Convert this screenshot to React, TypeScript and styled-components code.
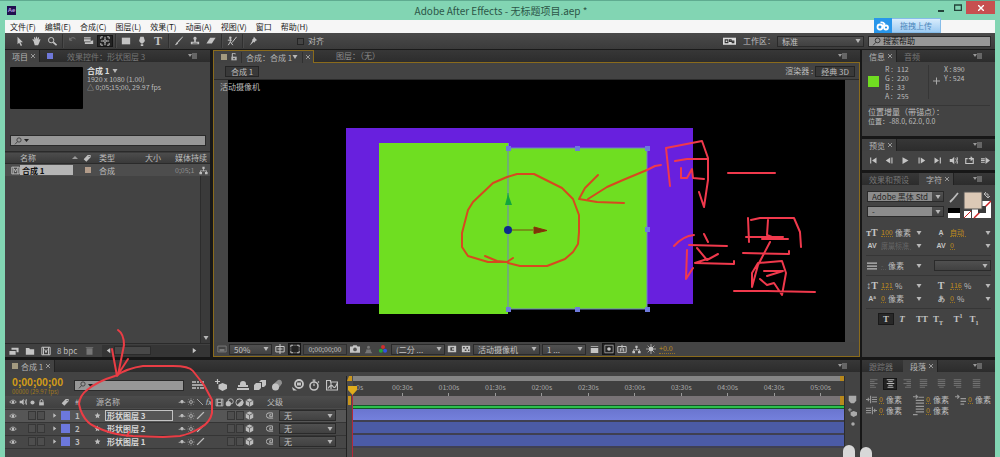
import React from "react";
import styled, { createGlobalStyle, css } from "styled-components";

const GlobalStyle = createGlobalStyle`
  *, *::before, *::after { box-sizing: border-box; }
  html, body, #root { height: 100%; margin: 0; }
  body { overflow: hidden; background: #82d5b3; font-family: "Noto Sans CJK SC", "Noto Sans", sans-serif; font-size: 8px; line-height: 10px; color: #bdbdbd; }
  button, input, select { font: inherit; color: inherit; margin: 0; padding: 0; border: 0; border-radius: 0; background: none; appearance: none; outline: none; }
  table { border-collapse: collapse; table-layout: fixed; width: 100%; }
  td, th { padding: 0; font-weight: 400; text-align: left; }
  svg { display: block; flex: none; }
`;

/* ---------- icons ---------- */

const s = { fill: "none", stroke: "currentColor", strokeWidth: 1.2 } as const;
const ICONS: Record<string, React.ReactNode> = {
  cursor: <path d="M3 1v9l2-2 2 4 1.500-1-2-3.500h3z" fill="currentColor" />,
  hand: <path d="M3 6 1.500 4.500l1-1L4 5 3.500 1.500h1.200L5.500 4 6 1h1.200l.2 3L8.500 1.500l1.200.3L9.200 5l1.300-1.500.9.700L9.500 9 8.500 11H4.500z" fill="currentColor" />,
  zoom: <><circle cx="5" cy="5" r="3.200" {...s} /><path d="M7.500 7.500 11.500 11" {...s} strokeWidth={2} /></>,
  rotate: <path d="M2 5a4 4 0 0 1 7-1.500M2 2v3h3" {...s} />,
  camera: <path d="M0 1.500h8v1.500H0zM0 4h8v2l3-1v4.500H1V7.500h7V6.500H0z" fill="currentColor" />,
  anchor: <><path d="M1 3.500V1h2.500M8.500 1H11v2.500M11 8.500V11H8.500M3.500 11H1V8.500" {...s} /><circle cx="6" cy="6" r="1.600" {...s} /><path d="M6 1v2.500M6 8.500V11M1 6h2.500M8.500 6H11" {...s} /></>,
  rect: <path d="M1 2h10v8H1z" fill="currentColor" />,
  pen: <path d="M4 1h4l1.500 5L7 9H5L2.500 6zM4.500 10h3v2h-3z" fill="currentColor" />,
  brush: <path d="M11 1 5.500 7.500 4.200 6.500 10 1zM4 7l1.300 1.200C4.500 10 3 11 1 11c1.500-1 1.500-3 3-4z" fill="currentColor" />,
  stamp: <path d="M6 1a2 2 0 0 1 1 3.700V7h4v3H1V7h4V4.700A2 2 0 0 1 6 1zM3 8h6v1H3z" fill="currentColor" fillRule="evenodd" />,
  eraser: <path d="M5 2h6.500L7 9H.5z" fill="currentColor" />,
  roto: <><circle cx="4" cy="2" r="1.500" fill="currentColor" /><path d="M4 3v4L1.500 11M4 7l3 4M1 5h5M11.500 1 6 8" {...s} /></>,
  pin: <path d="M7 1 11 5 9.500 5.500 7.500 8 7 6.800 2 11.500 5.500 5.500 4.500 5l2-2z" fill="currentColor" />,
  search: <><circle cx="7.500" cy="4.500" r="3.200" {...s} /><path d="M5.200 7 1.500 11" {...s} /></>,
  eye: <><path d="M1 6q5-6 10 0q-5 5-10 0z" {...s} /><circle cx="6" cy="6" r="2" fill="currentColor" /></>,
  speaker: <><path d="M1 4h3l3-3v10L4 8H1z" fill="currentColor" /><path d="M9 3q2 3 0 6M10.800 1.500q2 4.500 0 9" {...s} /></>,
  dot: <circle cx="6" cy="6" r="3.500" fill="currentColor" />,
  lock: <><path d="M2 5.500h8V11H2z" fill="currentColor" /><path d="M3.500 6V3.500a2.500 2.500 0 0 1 5 0V6" {...s} strokeWidth={1.600} /></>,
  unlock: <><path d="M2 5.500h8V11H2z" fill="currentColor" /><path d="M3.500 6V3a2 2 0 0 1 4.500-1" {...s} strokeWidth={1.600} /><path d="M5 7.500h2v2H5z" fill="#333" /></>,
  tag: <path d="M1 8 7 1.500h4.500V5L5 11.500zM8.500 3v1.500H10V3z" fill="currentColor" fillRule="evenodd" />,
  star: <path d="m6 1 1.500 3.300 3.500.4-2.600 2.400.7 3.500L6 8.900 2.900 10.600l.7-3.500L1 4.700l3.500-.4z" fill="currentColor" />,
  tri: <path d="M4 2v8l5-4z" fill="currentColor" />,
  shy: <path d="M1 6.500h3M8 6.500h3M6 3.500a2 2 0 1 1 0 4 2 2 0 0 1 0-4" {...s} fill="currentColor" />,
  sun: <><circle cx="6" cy="6" r="2.200" {...s} /><path d="M6 .5v2M6 9.500v2M.5 6h2M9.500 6h2M2 2l1.300 1.300M8.700 8.700 10 10M10 2 8.700 3.300M3.300 8.700 2 10" {...s} strokeWidth={0.800} /></>,
  flare: <><circle cx="6" cy="6" r="2.800" fill="currentColor" /><path d="M6 0v12M0 6h12M2 2l8 8M10 2l-8 8" {...s} strokeWidth={0.900} /></>,
  slash: <path d="M1.500 10.500 10.500 1.500" {...s} strokeWidth={1.800} />,
  back: <path d="M1.500 1.500 10.500 10.500" {...s} />,
  film: <><path d="M1.500 1.500h9v9h-9zM3.500 1.500v9M8.500 1.500v9M3.500 6h5" {...s} /></>,
  blend: <><circle cx="4.500" cy="7.500" r="3.500" fill="currentColor" /><circle cx="7.500" cy="4.500" r="3.500" {...s} /></>,
  half: <><circle cx="6" cy="6" r="4.800" {...s} /><path d="M9.500 2.500A4.800 4.800 0 0 1 2.600 9.400z" fill="currentColor" /></>,
  cube: <><path d="M6 .8 11 3v6l-5 2.500L1 9V3z" fill="currentColor" /><path d="M1 3l5 2.500L11 3M6 5.500v6" fill="none" stroke="#444" strokeWidth={0.900} /></>,
  spiral: <path d="M9.500 9.500H4a3.500 3.500 0 1 1 0-7h4.500v5.200H5V5h2" {...s} />,
  graph: <path d="M0 3h4M0 6h3M0 9h4M5 9h2M5 3h2M8 3h4M9 6h3M8 9h4M3 6h6" {...s} strokeWidth={1.500} />,
  cubestar: <><path d="M7.500 4 12 5.800v4L7.500 12 3.500 9.800v-4z" fill="currentColor" /><path d="M2.500 0v5M0 2.500h5" {...s} /></>,
  shyman: <path d="M0 9h12v2H0zM1 8V6h2V5a3 3 0 0 1 6 0v1h2v2z" fill="currentColor" />,
  frames: <path d="M0 6l2-2h5v5l-2 2H0zM5 3l2-2h5v5l-2 2H8V3z" fill="currentColor" />,
  motion: <><circle cx="4.500" cy="8" r="3.500" fill="currentColor" /><path d="m2 5.500 5-4.500q4-1 4 3.500L7 10z" fill="currentColor" opacity="0.600" /></>,
  bulb: <><circle cx="7" cy="5" r="4" {...s} strokeWidth={1.800} /><path d="M5 3.500h4v3H5zM0 8l5 3.500H1z" fill="currentColor" /></>,
  stopwatch: <><circle cx="6" cy="7" r="4" {...s} strokeWidth={1.600} /><path d="M6 7V4.500M4.500 1h3M6 1v2M10 2.500l1 1" {...s} /></>,
  curve: <><path d="M.5 1.500h4v1.500h7v8h-11z" {...s} /><path d="M2 9.500q3-5 5-2t4-3M5 3v7" {...s} /></>,
  bin: <path d="M2 3h8v8.500H2zM1 1.500h10v1H1z" fill="currentColor" />,
  folder: <path d="M1 2.500h4l1 1.500h5v6.500H1z" fill="currentColor" />,
  interpret: <path d="M3 2h8.500v5.500H9V4.500H3zM.5 6H8v4.500H.5z" fill="currentColor" />,
  comp: <><path d="M1 1.500h10v9H1z" {...s} /><path d="M3 1.500v9M9 1.500v9M4.500 4l1.500 4 1.500-4" {...s} /></>,
  flow: <path d="M4.500 1h3v3h-3zM.5 8h3.500v3H.5zM8 8h3.500v3H8zM5.500 4h1v2h4v2h-1V7h-7v1h-1V6h4z" fill="currentColor" />,
  left: <path d="M9 1.500v9L3 6z" fill="currentColor" />,
  right: <path d="M3 1.500v9L9 6z" fill="currentColor" />,
  screen: <><path d="M1 2.500h10v7H1z" {...s} /><path d="M3 6h6v3H3z" fill="currentColor" /></>,
  grid: <path d="M1 3h10v6.500H1zM6 0v12M3 6h6" {...s} />,
  mask: <path d="M1 4V1.500h3M8 1.500h3V4M11 8v2.500H8M4 10.500H1V8M1 5.500v1M11 5.500v1M5.500 1.500h1M5.500 10.500h1" {...s} />,
  snap: <><path d="M0 3h3l1-1.500h4L9 3h3v7.500H0z" fill="currentColor" /><circle cx="6" cy="6.500" r="2.200" fill="#555" /></>,
  person: <path d="M6 1a2 2 0 1 1 0 4 2 2 0 0 1 0-4zM3 6h6v2l2 3H1l2-3z" fill="currentColor" />,
  rgb: <><circle cx="6" cy="3.500" r="2.400" fill="#d02d2d" /><circle cx="3.500" cy="8" r="2.400" fill="#22a63b" /><circle cx="8.500" cy="8" r="2.400" fill="#3452e0" /></>,
  checker: <path d="M1 2h10v8H1zM2.500 3.500v2h2v-2zM6.500 3.500v2h2v-2zM4.500 6.500v2h2v-2zM8.500 6.500v2h1.500v-2z" fill="currentColor" fillRule="evenodd" />,
  roi: <path d="M1 2h10v8H1zM4 4v4h4.500V7H6V5h2.500V4z" fill="currentColor" fillRule="evenodd" />,
  pixel: <path d="M1 1.500h10v1.200H1zM1 4h10v6.500H1z" fill="currentColor" />,
  fast: <><path d="M1 1.500h10v9H1z" {...s} strokeWidth={0.800} /><circle cx="6" cy="6" r="2.200" fill="currentColor" /></>,
  timeline: <path d="M1 3h10v7H1zM4 5v4M8 5v4M6 1v7" {...s} />,
  first: <path d="M1.500 2H3v8H1.500zM10 2v8L4 6z" fill="currentColor" />,
  prev: <path d="M7 2v8L1 6zM8.500 2H10v8H8.500z" fill="currentColor" />,
  play: <path d="M2 1.500v9L10 6z" fill="currentColor" />,
  next: <path d="M2 2h1.500v8H2zM5 2v8l6-4z" fill="currentColor" />,
  last: <path d="M2 2v8l6-4zM9 2h1.500v8H9z" fill="currentColor" />,
  loop: <path d="M3.500 3.500H1v6.500h10V3.500H5M7.500 1 10 3.500 7.500 6" {...s} strokeWidth={1.500} />,
  ram: <path d="M0 3h5v1.500H0zM0 5.300h5v1.500H0zM0 7.600h5v1.500H0zM6 1.500v9L12 6z" fill="currentColor" />,
  lines: <path d="M0 2.500h12M0 6h12M0 9.500h12" {...s} strokeWidth={1.500} />,
  alignL: <path d="M0 1h10M0 3.500h6M0 6h10M0 8.500h6M0 11h8" {...s} />,
  alignC: <path d="M1 1h10M3 3.500h6M1 6h10M3 8.500h6M2 11h8" {...s} />,
  alignR: <path d="M2 1h10M6 3.500h6M2 6h10M6 8.500h6M4 11h8" {...s} />,
  alignJ: <path d="M1 1h10M1 3.500h10M1 6h10M1 8.500h10M1 11h7" {...s} />,
  alignK: <path d="M1 1h10M1 3.500h10M1 6h10M1 8.500h10M3 11h6" {...s} />,
  alignM: <path d="M1 1h10M1 3.500h10M1 6h10M1 8.500h10M4 11h7" {...s} />,
  alignA: <path d="M1 1h10M1 3.500h10M1 6h10M1 8.500h10M1 11h10" {...s} />,
  indL: <path d="M0 6h4M2.500 4v4M5 2v8M6.500 3.500H12M6.500 6H12M6.500 8.500H12" {...s} />,
  indR: <path d="M0 3.500h5.500M0 6h5.500M0 8.500h5.500M7 2v8M8 6h4M9.500 4v4" {...s} />,
  indT: <path d="M0 3h5M3 1l2 2-2 2M6 3.500h6M3 7h9M3 10h9" {...s} />,
  indF: <path d="M0 3h4M2.500 1l2 2-2 2M6 5h6M6 8h6M6 11h4" {...s} />,
  indB: <path d="M3 1.500h9M3 4.500h9M3 7.500h9M0 10.500h5" {...s} />,
  marker: <path d="M1 1h10v6.500L8 11H4L1 7.500z" fill="currentColor" />,
  window: <><path d="M0 2.500h12v6.500H0z" fill="#ddd" /><path d="M2 4.500h2.500v2.500H2zM6 4.500h1.500V6H6zM8.500 5.500H10V7H8.500z" fill="none" stroke="#333" /></>,
};

const Icon = ({ name, size = 10 }: { name: string; size?: number }) => (
  <svg width={size} height={size} viewBox="0 0 12 12" aria-hidden="true">{ICONS[name]}</svg>
);

/* ---------- shared parts ---------- */

const Row = styled.div<{ $gap?: number; $pl?: number; $pr?: number; $end?: boolean }>`
  display: flex; align-items: center; gap: ${(p) => p.$gap ?? 0}px; padding: 0 ${(p) => p.$pr ?? 0}px 0 ${(p) => p.$pl ?? 0}px;
  ${(p) => p.$end && css`justify-content: flex-end;`}
`;
const Spacer = styled.div`flex: 1;`;
const IconButton = styled.button<{ $w?: number; $active?: boolean; $dim?: boolean }>`
  display: flex; align-items: center; justify-content: center; flex: none;
  width: ${(p) => p.$w ?? 16}px; height: 12px; color: ${(p) => (p.$dim ? "#777" : "#c4c4c4")};
  ${(p) => p.$active && css`background: #222; box-shadow: inset 0 0 0 1px #151515;`}
`;
const Divider = styled.span`width: 2px; height: 14px; margin: 0 1px 0 2px; background: #303030; border-right: 1px solid #4a4a4a; flex: none;`;

const SelectBox = styled.label<{ $w?: number; $light?: boolean }>`
  display: flex; align-items: center; height: 11px; width: ${(p) => (p.$w ? p.$w + "px" : "auto")}; flex: ${(p) => (p.$w ? "none" : "1")}; min-width: 0;
  border: 1px solid #2a2a2a; background: linear-gradient(#505050, #414141); color: #c2c2c2;
  select { flex: 1; min-width: 0; height: 9px; line-height: 9px; padding-left: 4px; align-self: stretch;
    ${(p) => p.$light && css`background: #8c8c8c; color: #262626;`} }
  svg { margin: 0 2px 0 3px; }
`;
const Arrow = () => <svg width="6" height="4" viewBox="0 0 6 4"><path d="M.5 0h5L3 4z" fill="#b8b8b8" /></svg>;
const Select = ({ w, light, label, value }: { w?: number; light?: boolean; label: string; value: string }) => (
  <SelectBox $w={w} $light={light}>
    <select aria-label={label} defaultValue={value}><option>{value}</option></select>
    <Arrow />
  </SelectBox>
);

const SearchBox = styled.label<{ $w?: number }>`
  display: flex; align-items: center; gap: 2px; height: 11px; padding: 0 3px; color: #333;
  width: ${(p) => (p.$w ? p.$w + "px" : "auto")}; background: #979797; border: 1px solid #2a2a2a;
  input { flex: 1; min-width: 0; height: 9px; color: #161616; }
  input::placeholder { color: #161616; opacity: 1; }
`;
const DarkArrow = () => <svg width="5" height="3" viewBox="0 0 5 3"><path d="M0 0h5L2.500 3z" fill="#222" /></svg>;

const TabBar = styled.div`display: flex; align-items: stretch; height: 12px; background: linear-gradient(#373737, #2c2c2c); flex: none;`;
const Tab = styled.button<{ $active?: boolean; $pr?: number; $gap?: number }>`
  display: flex; align-items: center; gap: ${(p) => p.$gap ?? 3}px; padding: 0 ${(p) => p.$pr ?? 4}px 0 7px; white-space: nowrap; line-height: 11px;
  color: ${(p) => (p.$active ? "#b4b4b4" : "#767676")}; background: ${(p) => (p.$active ? "#424242" : "transparent")};
  border-right: ${(p) => (p.$active ? "1px solid #222" : "0")};
`;
const Close = () => <svg width="4" height="4" viewBox="0 0 4 4"><path d="M0 0l4 4M4 0 0 4" stroke="#999" /></svg>;
const PanelMenuButton = styled.button`display: flex; align-items: center; margin-left: auto; width: 22px; color: #999;`;
const PanelMenu = () => (
  <PanelMenuButton aria-label="面板菜单">
    <svg width="9" height="6" viewBox="0 0 9 6"><path d="M0 1h4L2 4zM4 .5h5v1H4zM4 2.500h5v1H4zM4 4.500h5v1H4z" fill="currentColor" /></svg>
  </PanelMenuButton>
);
const Swatch = styled.span<{ $c: string; $s?: number }>`
  display: block; flex: none; width: ${(p) => p.$s ?? 6}px; height: ${(p) => p.$s ?? 6}px; background: ${(p) => p.$c};
`;

/* ---------- window chrome ---------- */

const Window = styled.div`height: 100%; display: flex; flex-direction: column; padding: 0 5px; background: #82d5b3; overflow: hidden;`;
const TitleBar = styled.header`
  display: flex; align-items: center; height: 20px; flex: none; margin: 0 -5px; padding-left: 7px;
  border-top: 1px solid #5fab90; color: #2c5547;
`;
const Logo = styled.span`width: 9px; height: 9px; background: #21104f; color: #b7a3e0; font: 700 6px/9px "Liberation Sans", sans-serif; text-align: center;`;
const Title = styled.h1`flex: 1; margin: 0; text-align: center; font: 400 10px/18px "Noto Sans CJK SC", sans-serif; padding-left: 54px;`;
const WinButton = styled.button<{ $close?: boolean }>`
  display: flex; align-items: center; justify-content: center; align-self: flex-start; color: ${(p) => (p.$close ? "#fff" : "#24443a")};
  width: ${(p) => (p.$close ? 29 : 17)}px; height: 13px; background: ${(p) => (p.$close ? "#c75050" : "transparent")}; margin-right: ${(p) => (p.$close ? 5 : 0)}px;
`;
const MenuBar = styled.nav`
  position: relative; display: flex; align-items: center; gap: 9px; height: 13px; flex: none; padding-left: 5px;
  background: #f6f6f6; color: #222; line-height: 12px;
`;
const Upload = styled.button`
  position: absolute; right: 54px; top: -2px; display: flex; align-items: center; width: 67px; height: 15px;
  background: linear-gradient(#d8ecfc, #9dcbf2); color: #4c87bb; border: 1px solid #86bce8;
  svg { background: #2896ea; margin: -1px 8px -1px -1px; }
`;
const ToolBar = styled.div`
  display: flex; align-items: center; height: 17px; flex: none; padding: 0 4px 0 7px; background: linear-gradient(#4a4a4a, #3b3b3b);
  border-bottom: 1px solid #1a1a1a;
`;
const TypeTool = styled.span`font: 700 12px/12px "Liberation Serif", serif;`;
const CheckLabel = styled.label`
  display: flex; align-items: center; gap: 4px; margin-left: 36px;
  input { width: 7px; height: 7px; border: 1px solid #262626; background: #444; }
`;
const Workspace = styled.div`display: flex; align-items: center; gap: 7px; margin-right: 2px;`;
const HelpSearch = styled.div`margin-left: 4px;`;
const Body = styled.div`flex: 1; min-height: 0; display: flex; gap: 2px; background: #171717;`;
const Main = styled.div`flex: 1; min-width: 0; display: flex; flex-direction: column; gap: 3px;`;
const Upper = styled.div`display: flex; gap: 3px;`;

/* ---------- project panel ---------- */

const ProjectPanel = styled.section`width: 205px; flex: none; display: flex; flex-direction: column; background: #434343;`;
const Preview = styled.div`display: flex; gap: 4px; padding: 5px 5px 0; height: 73px;`;
const Thumb = styled.div`width: 73px; height: 42px; background: #000; border-radius: 1px;`;
const Meta = styled.div`font-size: 7px; line-height: 8px; strong { display: flex; align-items: center; gap: 2px; font-size: 8px; color: #ddd; }`;
const ProjectSearch = styled.div`padding: 0 4px 5px 5px;`;
const ProjectTable = styled.table`
  tr { height: 12px; line-height: 11px; white-space: nowrap; }
  thead tr { background: linear-gradient(#4c4c4c, #3a3a3a); border-top: 1px solid #2a2a2a; border-bottom: 1px solid #2a2a2a; }
  tbody tr { background: #4d4d4d; }
`;
const Dim = styled.span`font-size: 7px; color: #8f8f8f;`;
const NameField = styled.input`width: 53px; height: 10px; padding-left: 2px; background: #b5b5b5; color: #111; font-weight: 700;`;
const ListArea = styled.div`flex: 1; display: flex; justify-content: flex-end;`;
const ScrollTrack = styled.div`
  width: 10px; background: #3a3a3a; border-left: 1px solid #2c2c2c; display: flex; align-items: flex-end; justify-content: center; padding-bottom: 3px;
`;
const FooterBar = styled.div`display: flex; align-items: center; height: 14px; flex: none; background: #404040; border-top: 1px solid #2a2a2a; padding-left: 1px;`;
const Depth = styled.button`padding-left: 3px;`;
const ScrollBar = styled.div`flex: 1; display: flex; align-items: center; background: #353535; height: 12px; padding-right: 12px;`;
const ScrollThumb = styled.span`width: 37px; height: 9px; background: #484848; border: 1px solid #2b2b2b; margin-right: auto;`;

/* ---------- composition panel ---------- */

const GOLD = "#8a6b1c";
const CompPanel = styled.section`flex: 1; min-width: 0; display: flex; flex-direction: column; border: 1px solid ${GOLD}; border-top: 0; background: #434343;`;
const CompTabs = styled.div`display: flex; align-items: stretch; height: 13px; margin: 0 -1px; background: linear-gradient(#373737, #2c2c2c);`;
const CompTab = styled.button`
  display: flex; align-items: center; gap: 3px; width: 101px; padding-left: 7px; color: #b4b4b4; background: #424242;
  border: 1px solid ${GOLD}; border-bottom: 0; line-height: 11px;
`;
const TabName = styled.span`display: flex; align-items: center; justify-content: space-between; width: 62px; height: 11px; padding: 0 4px; border: solid #303030; border-width: 0 1px; white-space: nowrap;`;
const OtherTabs = styled.div`flex: 1; display: flex; align-items: center; padding-left: 22px; border-bottom: 1px solid ${GOLD}; color: #8c8c8c;`;
const SubBar = styled.div`display: flex; align-items: center; gap: 2px; height: 17px; padding: 0 4px 0 11px; border-bottom: 1px solid #2b2b2b;`;
const Crumb = styled.button`height: 11px; line-height: 9px; padding: 0 5px; border: 1px solid #252525; background: #393939; color: #bdbdbd;`;
const Viewport = styled.div`position: relative; padding: 0 14px; background: #454545;`;
const Stage = styled.div`display: flex; justify-content: center; background: #000; overflow: hidden;`;
const CameraLabel = styled.span`position: absolute; left: 6px; top: 2px; color: #bcbcbc;`;
const CompFooter = styled.div`display: flex; align-items: center; height: 14px; flex: none; padding-left: 1px; background: #444;`;
const TimeButton = styled.button`width: 44px; height: 11px; border: 1px solid #2f2f2f; background: #464646; color: #c2c2c2; font-size: 7px; line-height: 9px;`;
const HotText = styled.input<{ $w: number; $dim?: boolean }>`
  width: ${(p) => p.$w}px; height: 9px; line-height: 9px; font-size: 7px; color: ${(p) => (p.$dim ? "#666" : "#c28f1d")}; border-bottom: 1px dotted ${(p) => (p.$dim ? "#555" : "#9a7420")};
`;

const HANDLES = [[279, 68], [348, 68], [418, 68], [418, 149], [418, 229], [348, 229], [279, 229]];
const Canvas = () => (
  <svg width="615" height="262" viewBox="0 0 615 262" aria-label="合成画面">
    <path d="M117 48h347v176H117z" fill="#6820de" />
    <path d="M150 63h129v171H150z" fill="#6fde21" />
    <path d="M279 68h139v161H279z" fill="#6fde21" stroke="#7381c9" />
    <path d="M279.500 63v5" stroke="#7381c9" />
    {HANDLES.map(([x, y], i) => <rect key={i} x={x - 2} y={y - 2} width="5" height="5" fill="#6d79dc" />)}
    <path d="M279 125v-12" stroke="#16a34a" /><path d="m279 114-3 11h7z" fill="#13a53c" />
    <path d="M283 150h21" stroke="#7a4a0c" /><path d="m305 147 13 3.500-13 3z" fill="#7a3808" stroke="#8d2f08" />
    <circle cx="279" cy="150" r="4" fill="#0c2a8c" />
    <g fill="none" strokeWidth="2" strokeLinecap="round" strokeLinejoin="round">
      <g stroke="#d7491f">
        <path d="M256 176 268 181 278 182 284 178" />
        <path d="M278 182 259 182 239 176 233 167V153L239 130 244 122 264 103 278 97 288 94H305L323 103 333 108 344 119 350 135V152L349 164 344 172 336 179 318 186H291L279 183" />
        <path d="M369 95 356 108 350 119 368 122 395 123M359 119 378 107 394 100 418 90" />
      </g>
      <g stroke="#f0394c">
        <path d="M418 90 426 86 432 85" />
        <path d="M441 106 437 68 473 61 479 78V100L475 127 470 112M446 81 458 79H478M452 88V98H458L463 89 464 98 475 99M499 93H546" />
        <path d="M445 166Q454 156 465 155M458 170 457 199 464 188M475 154 479 162M460 165 498 166M468 168 478 180 489 174M478 179 466 183 505 184V181" />
        <path d="M519 138 520 162M522 140 531 138H565L571 152 572 167M539 140 538 155 543 157M517 157H554M533 159H559M514 173 560 174V171" />
        <path d="M541 162 529 185 523 207V193L529 183 553 181 557 193 553 215 545 203 538 205 531 199M535 191H554L538 196M505 211H538L586 212" />
      </g>
    </g>
  </svg>
);

/* ---------- timeline ---------- */

const TimelinePanel = styled.section`position: relative; flex: 1; min-height: 0; display: flex; flex-direction: column; background: #434343;`;
const TimelineBody = styled.div`flex: 1; display: flex; min-height: 0; padding-top: 4px;`;
const Outline = styled.div`width: 341px; flex: none; background: #464646;`;
const OutlineHead = styled.div`display: flex; align-items: center; height: 20px; padding: 0 0 2px 7px; background: #434343;`;
const Timecode = styled.div`width: 62px; font-size: 6px; line-height: 7px; color: #a27a1c;`;
const TimecodeInput = styled.input`display: block; width: 60px; height: 12px; font: 700 10px/12px "Noto Sans CJK SC", sans-serif; color: #d09a18;`;
const HeadIcons = styled.div`display: grid; grid-template-columns: 23px 22px 17px 17px 21px 16px 18px 12px; margin-left: 8px; color: #c4c4c4;`;
const LayerTable = styled.table`
  tr { height: 13px; border-bottom: 1px solid #353535; background: #474747; line-height: 12px; }
  thead tr { background: linear-gradient(#4c4c4c, #404040); }
  tbody tr:first-child { background: #565656; }
`;
const LayerName = styled.span<{ $boxed?: boolean }>`
  width: 68px; height: 11px; line-height: 9px; padding-left: 1px; border: 1px solid ${(p) => (p.$boxed ? "#c4c4c4" : "transparent")}; color: #d5d5d5; font-weight: 700;
`;
const Cell = styled.span`width: 8px; height: 9px; border: 1px solid #373737; background: #4e4e4e;`;
const Tracks = styled.div`flex: 1; min-width: 0; border-left: 1px solid #222; padding-left: 6px; background: #4b4b4b;`;
const Navigator = styled.div`height: 5px; background: #858585; border-right: 4px solid #b8891d;`;
const Ruler = styled.div`display: flex; height: 15px; background: #404040; color: #aaa; font-size: 7px;`;
const Mark = styled.span`
  flex: 30 1 0; display: flex; flex-direction: column; align-items: center; line-height: 12px;
  &::after { content: ""; width: 1px; height: 3px; background: #999; }
`;
const HalfMark = styled.span`flex: 15 1 0; line-height: 12px; padding-left: 3px;`;
const WorkArea = styled.div`height: 9px; background: #787376; border-right: 4px solid #b8891d;`;
const CacheLine = styled.div`height: 4px; border: solid #14562a; border-width: 1px 0; background: #2dbf4c;`;
const Bar = styled.div<{ $selected?: boolean }>`
  height: 13px; border-bottom: 2px solid #3f4052; background: ${(p) => (p.$selected ? "linear-gradient(#6a75cf, #7480dc)" : "#4b5ba6")};
`;
const Playhead = styled.svg`position: absolute; left: 341px; top: 16px;`;
const Annotation = styled.svg`position: absolute; left: 0; top: 0; overflow: visible; pointer-events: none;`;
const TrackTools = styled.div`width: 16px; border-left: 1px solid #2c2c2c; display: flex; flex-direction: column; align-items: center; gap: 4px; padding-top: 19px; color: #aaa;`;
const Watermark = styled.svg`position: fixed; right: 126px; bottom: 0;`;

const LAYERS = ["形状图层 3", "形状图层 2", "形状图层 1"];
const MARKS = ["00:30s", "01:00s", "01:30s", "02:00s", "02:30s", "03:00s", "03:30s", "04:00s", "04:30s", "05:00s"];

/* ---------- side panels ---------- */

const Side = styled.aside`width: 133px; flex: none; display: flex; flex-direction: column; gap: 3px;`;
const SidePanel = styled.section<{ $h?: number }>`
  background: #434343; ${(p) => (p.$h ? css`height: ${p.$h}px; flex: none;` : css`flex: 1; min-height: 0; overflow: hidden;`)}
`;
const InfoGrid = styled.div`display: grid; grid-template-columns: 17px 43px 1fr; height: 41px; margin: 3px 5px 0 6px; font-size: 7px; line-height: 9px; border-bottom: 1px solid #363636;`;
const InfoSwatch = styled.div`padding-top: 11px;`;
const Channels = styled.dl`display: grid; grid-template-columns: 12px 1fr; align-content: start; margin: 0; dt, dd { margin: 0; height: 9px; }`;
const Coords = styled.div`display: flex; align-items: flex-start; gap: 4px; border-left: 1px solid #363636; padding-left: 4px; height: 34px;`;
const InfoText = styled.p`margin: 0 6px; line-height: 9px; padding-top: 1px; white-space: nowrap; span { font-size: 7px; }`;
const Transport = styled.div`display: flex; justify-content: space-between; align-items: center; height: 18px; padding: 0 3px 0 5px;`;
const FontArea = styled.div`display: flex; gap: 4px; padding: 6px 4px 6px 5px; height: 41px;`;
const Stack = styled.div`display: flex; flex-direction: column; gap: 4px; align-items: flex-start;`;
const CharRow = styled.div`display: grid; grid-template-columns: 1fr 1fr; column-gap: 12px; height: 13px; align-items: center; padding: 0 4px 0 3px;`;
const CharField = styled.label`display: flex; align-items: center; gap: 2px; svg:last-child { margin-left: auto; }`;
const Glyph = styled.span<{ $serif?: boolean }>`width: 14px; flex: none; text-align: center; color: #c4c4c4; font: ${(p) => (p.$serif ? `700 10px/11px "Liberation Serif", serif` : `700 7px/9px "Liberation Sans", sans-serif`)};`;
const Rule = styled.hr`margin: 3px 4px; height: 1px; border: 0; background: #363636;`;
const StyleRow = styled.div`display: flex; align-items: center; padding-left: 16px; height: 14px;`;
const StyleButton = styled.button<{ $active?: boolean; $ml?: number; $italic?: boolean }>`
  width: 16px; height: 12px; margin-left: ${(p) => p.$ml ?? 0}px; color: #c4c4c4; font: ${(p) => (p.$italic ? "italic" : "normal")} 700 9px/12px "Liberation Serif", serif;
  ${(p) => p.$active && css`background: #282828; box-shadow: inset 0 0 0 1px #191919;`}
  sub, sup { font-size: 6px; line-height: 0; }
`;
const AlignRow = styled.div`display: grid; grid-template-columns: repeat(3, 16px) 19px 16px 16px 22px; align-items: center; padding: 0 0 0 4px; height: 23px; justify-items: center;`;
const IndentGrid = styled.div`display: grid; grid-template-columns: 47px 42px 40px; row-gap: 2px; padding: 0 0 0 4px;`;
const Indent = styled.label`display: flex; align-items: center; gap: 2px; height: 9px; white-space: nowrap; svg { color: #999; }`;

const Field = ({ glyph, serif, value, unit, w, label, dim }: { glyph: string; serif?: boolean; value: string; unit?: string; w: number; label: string; dim?: boolean }) => (
  <CharField>
    <Glyph $serif={serif}>{glyph}</Glyph>
    <HotText $w={w} $dim={dim} defaultValue={value} aria-label={label} />
    {unit}
    <Arrow />
  </CharField>
);

const TOOLS: [string, string, boolean?][] = [
  ["cursor", "选取"], ["hand", "手形"], ["zoom", "缩放"], ["|", "a"], ["rotate", "旋转", true], ["camera", "摄像机"], ["anchor", "锚点"], ["|", "b"],
  ["rect", "矩形"], ["pen", "钢笔"], ["type", "文字"], ["|", "c"], ["brush", "画笔"], ["stamp", "仿制图章"], ["eraser", "橡皮擦"], ["|", "d"], ["roto", "Roto 笔刷"], ["|", "e"], ["pin", "操控点"],
];
const MENUS = ["文件(F)", "编辑(E)", "合成(C)", "图层(L)", "效果(T)", "动画(A)", "视图(V)", "窗口", "帮助(H)"];

export default function App() {
  return (
    <Window>
      <GlobalStyle />
      <TitleBar>
        <Logo>Ae</Logo>
        <Title>Adobe After Effects - 无标题项目.aep *</Title>
        <WinButton aria-label="最小化"><svg width="6" height="9" viewBox="0 0 6 9"><path d="M0 7h6v2H0z" fill="currentColor" /></svg></WinButton>
        <WinButton aria-label="最大化"><svg width="8" height="7" viewBox="0 0 8 7"><path d="M.5 1h7v5.500h-7z" stroke="currentColor" strokeWidth="1.500" fill="none" /></svg></WinButton>
        <WinButton $close aria-label="关闭"><svg width="6" height="6" viewBox="0 0 6 6"><path d="m0 0 6 6M6 0 0 6" stroke="currentColor" strokeWidth="1.400" /></svg></WinButton>
      </TitleBar>
      <MenuBar>
        {MENUS.map((m) => <button key={m}>{m}</button>)}
        <Upload>
          <svg width="18" height="15" viewBox="0 0 18 15"><g fill="none" stroke="#fff" strokeWidth="1.800"><circle cx="6" cy="9" r="2.500" /><circle cx="12" cy="9.500" r="2" /><path d="M6.500 4.500a3.500 3.500 0 0 1 4 1.500L8 10" /></g></svg>
          拖拽上传
        </Upload>
      </MenuBar>
      <ToolBar>
        {TOOLS.map(([name, label, dim]) =>
          name === "|" ? <Divider key={label} /> : (
            <IconButton key={name} aria-label={label} $dim={dim} $active={name === "anchor"}>
              {name === "type" ? <TypeTool>T</TypeTool> : <Icon name={name} />}
            </IconButton>
          )
        )}
        <CheckLabel><input type="checkbox" />对齐</CheckLabel>
        <Spacer />
        <Workspace><Icon name="window" size={13} /><span>工作区：</span></Workspace>
        <Select w={87} label="工作区" value="标准" />
        <HelpSearch>
          <SearchBox $w={123}><Icon name="search" size={9} /><input aria-label="搜索帮助" placeholder="搜索帮助" /></SearchBox>
        </HelpSearch>
      </ToolBar>

      <Body>
        <Main>
          <Upper>
            <ProjectPanel>
              <TabBar>
                <Tab $active>项目<Close /></Tab>
                <Tab $gap={14}><Swatch $c="#6f78d8" />效果控件：形状图层 3</Tab>
                <PanelMenu />
              </TabBar>
              <Preview>
                <Thumb />
                <Meta>
                  <strong>合成 1<Arrow /></strong>
                  <div>1920 x 1080 (1.00)</div>
                  <div>△ 0;05;15;00, 29.97 fps</div>
                </Meta>
              </Preview>
              <ProjectSearch>
                <SearchBox><Icon name="search" size={8} /><DarkArrow /><input aria-label="搜索项目" /></SearchBox>
              </ProjectSearch>
              <ProjectTable>
                <colgroup><col width="15" /><col width="63" /><col width="16" /><col width="46" /><col width="30" /><col width="24" /><col width="11" /></colgroup>
                <thead>
                  <tr>
                    <th /><th><Row $pr={5}>名称<Spacer /><svg width="6" height="3" viewBox="0 0 6 3"><path d="M0 3h6L3 0z" fill="#999" /></svg></Row></th>
                    <th><Icon name="tag" size={8} /></th><th>类型</th><th>大小</th><th colSpan={2}>媒体持续</th>
                  </tr>
                </thead>
                <tbody>
                  <tr>
                    <td><Row $end><Icon name="comp" size={9} /></Row></td>
                    <td><NameField defaultValue="合成 1" aria-label="名称" /></td>
                    <td><Row $pl={2}><Swatch $c="#b39c8a" /></Row></td>
                    <td>合成</td><td /><td><Dim>0;05;1</Dim></td><td><Icon name="flow" size={9} /></td>
                  </tr>
                </tbody>
              </ProjectTable>
              <ListArea><ScrollTrack><Arrow /></ScrollTrack></ListArea>
              <FooterBar>
                <IconButton aria-label="解释素材"><Icon name="interpret" /></IconButton>
                <IconButton aria-label="新建文件夹"><Icon name="folder" /></IconButton>
                <IconButton aria-label="新建合成"><Icon name="comp" /></IconButton>
                <Depth>8 bpc</Depth>
                <IconButton $w={25} $dim aria-label="删除"><Icon name="bin" size={9} /></IconButton>
                <ScrollBar><IconButton $w={12} aria-label="向左"><Icon name="left" size={7} /></IconButton><ScrollThumb /><IconButton $w={8} aria-label="向右"><Icon name="right" size={7} /></IconButton></ScrollBar>
              </FooterBar>
            </ProjectPanel>

            <CompPanel>
              <CompTabs>
                <CompTab><Swatch $c="#a39a80" /><Icon name="unlock" size={8} /><TabName>合成：合成 1<Arrow /></TabName><Close /></CompTab>
                <OtherTabs>图层：（无）<PanelMenu /></OtherTabs>
              </CompTabs>
              <SubBar>
                <Crumb>合成 1</Crumb>
                <Spacer />
                <span>渲染器 :</span>
                <Crumb>经典 3D</Crumb>
              </SubBar>
              <Viewport>
                <Stage><Canvas /></Stage>
                <CameraLabel>活动摄像机</CameraLabel>
              </Viewport>
              <CompFooter>
                <IconButton $w={14} $dim aria-label="始终预览"><Icon name="screen" /></IconButton>
                <Select w={43} label="放大率" value="50%" />
                <IconButton $w={16} aria-label="网格"><Icon name="grid" /></IconButton>
                <IconButton $w={13} $active aria-label="蒙版"><Icon name="mask" /></IconButton>
                <Row $pl={2}><TimeButton>0;00;00;00</TimeButton></Row>
                <IconButton $w={15} aria-label="快照"><Icon name="snap" /></IconButton>
                <IconButton $w={13} $dim aria-label="显示快照"><Icon name="person" size={9} /></IconButton>
                <IconButton aria-label="通道"><Icon name="rgb" /></IconButton>
                <Select w={54} label="分辨率" value="(二分 ..." />
                <IconButton $w={14} aria-label="目标区域"><Icon name="roi" /></IconButton>
                <IconButton $w={14} aria-label="透明网格"><Icon name="checker" /></IconButton>
                <Select w={67} label="视图" value="活动摄像机" />
                <Row $pl={2}><Select w={44} label="视图布局" value="1 ..." /></Row>
                <IconButton aria-label="像素长宽比"><Icon name="pixel" size={9} /></IconButton>
                <IconButton $w={13} $active aria-label="快速预览"><Icon name="fast" /></IconButton>
                <IconButton $w={14} aria-label="时间轴"><Icon name="timeline" /></IconButton>
                <IconButton $w={14} aria-label="流程图"><Icon name="flow" size={9} /></IconButton>
                <IconButton aria-label="重置曝光度"><Icon name="flare" /></IconButton>
                <HotText $w={16} defaultValue="+0.0" aria-label="曝光度" />
              </CompFooter>
            </CompPanel>
          </Upper>

          <TimelinePanel>
            <TabBar>
              <Tab $active><Swatch $c="#a39a80" />合成 1<Close /></Tab>
              <PanelMenu />
            </TabBar>
            <TimelineBody>
              <Outline>
                <OutlineHead>
                  <Timecode><TimecodeInput defaultValue="0;00;00;00" aria-label="当前时间" />00000 (29.97 fps)</Timecode>
                  <SearchBox $w={110}><Icon name="search" size={8} /><DarkArrow /><input aria-label="搜索图层" /></SearchBox>
                  <HeadIcons>
                    {["graph", "cubestar", "shyman", "frames", "motion", "bulb", "stopwatch", "curve"].map((n) => <Icon key={n} name={n} size={12} />)}
                  </HeadIcons>
                </OutlineHead>
                <LayerTable>
                  <colgroup><col width="46" /><col width="10" /><col width="12" /><col width="14" /><col width="89" /><col width="87" /><col width="83" /></colgroup>
                  <thead>
                    <tr>
                      <th><Row $gap={2} $pl={4}><Icon name="eye" size={8} /><Icon name="speaker" size={8} /><Icon name="dot" size={7} /><Icon name="lock" size={7} /></Row></th>
                      <th /><th><Icon name="tag" size={8} /></th><th><Row $pl={2}>#</Row></th><th><Row $pl={9}>源名称</Row></th>
                      <th><Row $gap={1} $pl={2} $pr={9}>{["shy", "sun", "back"].map((n) => <Icon key={n} name={n} size={8} />)}<i>fx</i><Spacer />{["film", "blend", "half", "cube"].map((n) => <Icon key={n} name={n} size={9} />)}</Row></th>
                      <th><Row $pl={4}>父级</Row></th>
                    </tr>
                  </thead>
                  <tbody>
                    {LAYERS.map((name, i) => (
                      <tr key={name}>
                        <td><Row $gap={1} $pl={4}><Icon name="eye" size={8} /><Row $gap={1} $pl={10}><Cell /><Cell /></Row></Row></td>
                        <td><Icon name="tri" size={7} /></td>
                        <td><Swatch $c="#6c78dc" $s={9} /></td>
                        <td><Row $pl={2}><b>{i + 1}</b></Row></td>
                        <td><Row $gap={4} $pl={7}><Icon name="star" size={7} /><LayerName $boxed={i === 0}>{name}</LayerName></Row></td>
                        <td><Row $gap={1} $pl={2} $pr={9}><Icon name="shy" size={8} /><Icon name="sun" size={8} /><Icon name="slash" size={9} /><Spacer /><Cell /><Cell /><Icon name="cube" size={9} /></Row></td>
                        <td><Row $gap={4} $pl={3}><Icon name="spiral" size={9} /><Select w={57} label={`父级 ${name}`} value="无" /></Row></td>
                      </tr>
                    ))}
                  </tbody>
                </LayerTable>
              </Outline>
              <Tracks>
                <Navigator />
                <Ruler><HalfMark>0s</HalfMark>{MARKS.map((m) => <Mark key={m}>{m}</Mark>)}</Ruler>
                <WorkArea />
                <CacheLine />
                {LAYERS.map((name, i) => <Bar key={name} $selected={i === 0} />)}
              </Tracks>
              <TrackTools><Icon name="marker" size={9} /><Icon name="cubestar" size={9} /><Icon name="dot" size={6} /></TrackTools>
            </TimelineBody>
            <Playhead width="12" height="84" viewBox="0 0 12 84"><path d="M6.500 14v70" stroke="#b3283a" /><path d="M2 10h9v4l-4.500 5L2 14z" fill="#e0ad1c" /><path d="M3 0h3v5H1zM2 20h3v9H2z" fill="#c8951c" /></Playhead>
            <Annotation width="220" height="97" viewBox="5 360 220 97">
              <g fill="none" stroke="#ea3d45" strokeWidth="2" strokeLinecap="round" strokeLinejoin="round">
                <path d="M118 330Q124 334 124 345L118 375M112 349 117 376 128 359" />
                <path d="M115 376Q128 368 143 366H173Q189 366 193 371L204 385 212 400V413Q210 423 200 428 190 434 180 436L163 437 133 436Q115 435 103 430 92 426 88 422 81 415 79 404 80 395 87 390 98 381 115 376M127 436 129 432" />
              </g>
            </Annotation>
          </TimelinePanel>
        </Main>

        <Side>
          <SidePanel $h={86}>
            <TabBar><Tab $active>信息<Close /></Tab><Tab>音频</Tab><PanelMenu /></TabBar>
            <InfoGrid>
              <InfoSwatch><Swatch $c="#70dc21" $s={11} /></InfoSwatch>
              <Channels><dt>R :</dt><dd>112</dd><dt>G :</dt><dd>220</dd><dt>B :</dt><dd>33</dd><dt>A :</dt><dd>255</dd></Channels>
              <Coords><svg width="7" height="30" viewBox="0 0 7 30"><path d="M0 16h7M3.500 12.500v7" stroke="#aaa" /></svg><div>X : 890<br />Y : 524</div></Coords>
            </InfoGrid>
            <InfoText>位置增量（带锚点）：<br /><span>位置：-88.0, 62.0, 0.0</span></InfoText>
          </SidePanel>
          <SidePanel $h={31}>
            <TabBar><Tab $active>预览<Close /></Tab><PanelMenu /></TabBar>
            <Transport>{["first", "prev", "play", "next", "last", "speaker", "loop", "ram"].map((n) => <IconButton key={n} $w={12} aria-label={n}><Icon name={n} size={9} /></IconButton>)}</Transport>
          </SidePanel>
          <SidePanel $h={184}>
            <TabBar><Tab $pr={10}>效果和预设</Tab><Tab $active>字符<Close /></Tab><PanelMenu /></TabBar>
            <FontArea>
              <Stack>
                <Select w={77} light label="字体" value="Adobe 黑体 Std" />
                <Select w={77} light label="字体样式" value="-" />
              </Stack>
              <svg width="43" height="29" viewBox="0 0 43 29">
                <path d="M10 2 5 8 2 11" stroke="#bbb" strokeWidth="1.800" fill="none" />
                <path d="M0 17h12v5H0z" fill="#000" /><path d="M0 22h12v5H0z" fill="#fff" />
                <path d="M24 10h19v17H24z" fill="#fff" /><path d="M26 27 43 10" stroke="#c22" strokeWidth="1.500" /><path d="M30 15h8v7h-8z" fill="#3a3a3a" />
                <path d="M16 20h7v7h-7z" fill="#fff" /><path d="m16 27 7-7" stroke="#c22" />
                <path d="M16 1h18v17H16z" fill="#dcc9b6" stroke="#555" />
                <path d="M37 3h3v4M38 1l-2 2 2 2M38 5l2 2 2-2" stroke="#bbb" fill="none" />
              </svg>
            </FontArea>
            <CharRow><Field glyph="тT" serif value="100" unit="像素" w={12} label="字体大小" /><Field glyph="A͎" value="自动" w={16} label="行距" /></CharRow>
            <CharRow><Field glyph="AV" value="度量标准" dim w={30} label="字偶间距" /><Field glyph="AV" value="0" w={5} label="字符间距" /></CharRow>
            <Rule />
            <CharRow><CharField><Row $pl={2} $pr={2}><Icon name="lines" /></Row><HotText $w={5} $dim defaultValue="-" aria-label="描边宽度" />像素<Arrow /></CharField><Select label="描边方式" value="" /></CharRow>
            <Rule />
            <CharRow><Field glyph="↕T" serif value="121" unit="%" w={12} label="垂直缩放" /><Field glyph="T" serif value="116" unit="%" w={12} label="水平缩放" /></CharRow>
            <CharRow><Field glyph="Aª" value="0" unit="像素" w={5} label="基线偏移" /><Field glyph="あ" value="0" unit="%" w={5} label="比例间距" /></CharRow>
            <Rule />
            <StyleRow>
              <StyleButton $active>T</StyleButton><StyleButton $italic>T</StyleButton><StyleButton $ml={4}>TT</StyleButton><StyleButton>T<sub>T</sub></StyleButton><StyleButton $ml={4}>T<sup>1</sup></StyleButton><StyleButton>T<sub>1</sub></StyleButton>
            </StyleRow>
          </SidePanel>
          <SidePanel>
            <TabBar><Tab $pr={10}>跟踪器</Tab><Tab $active>段落<Close /></Tab><PanelMenu /></TabBar>
            <AlignRow>{["alignL", "alignC", "alignR", "alignJ", "alignK", "alignM", "alignA"].map((n, i) => <IconButton key={n} $w={14} $dim={i !== 1} $active={i === 1} aria-label={`对齐 ${i + 1}`}><Icon name={n} size={9} /></IconButton>)}</AlignRow>
            <IndentGrid>
              {["indL", "indT", "indF", "indR", "indB"].map((n) => <Indent key={n}><Icon name={n} size={11} /><HotText $w={5} defaultValue="0" aria-label={n} />像素</Indent>)}
            </IndentGrid>
          </SidePanel>
        </Side>
      </Body>
      <Watermark width="32" height="13" viewBox="0 0 32 13" aria-hidden="true"><path d="M1 13V7a6 6 0 0 1 12 0v6zM18 13V9a6 6 0 0 1 12 0v4z" fill="#d8d8d8" /></Watermark>
    </Window>
  );
}
